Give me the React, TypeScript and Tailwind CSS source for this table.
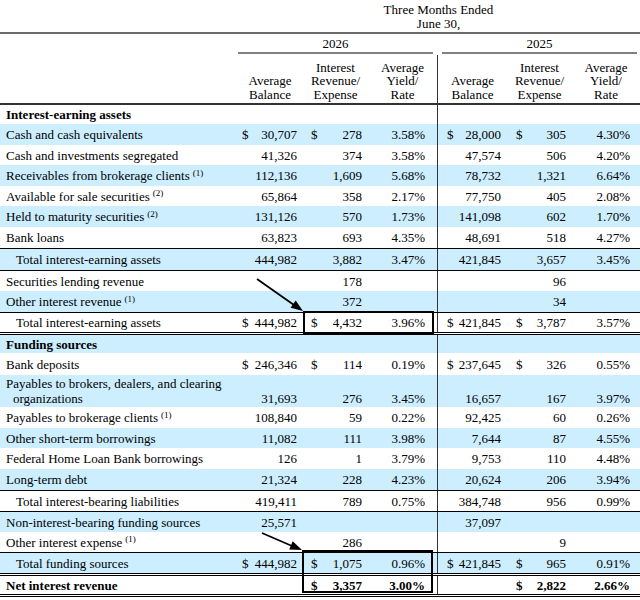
import type { ReactNode } from 'react'

type Row = {
  label: ReactNode
  h: string
  blue?: boolean
  line?: string
  bold?: boolean
  indent?: boolean
  tall?: boolean
  v?: string[]
}

const Sup = ({ n }: { n: number }) => <sup className="ml-[3px] text-[9px]">({n})</sup>

const THIN = 'border-b border-black'
const DOUBLE = 'border-b-[3px] border-double border-black'

const rows: Row[] = [
  { label: 'Interest-earning assets', h: 'h-[19px]', bold: true },
  { label: 'Cash and cash equivalents', h: 'h-[21px]', blue: true, v: ['$30,707', '$278', '3.58%', '$28,000', '$305', '4.30%'] },
  { label: 'Cash and investments segregated', h: 'h-[20px]', v: ['41,326', '374', '3.58%', '47,574', '506', '4.20%'] },
  { label: <>Receivables from brokerage clients<Sup n={1} /></>, h: 'h-[21px]', blue: true, v: ['112,136', '1,609', '5.68%', '78,732', '1,321', '6.64%'] },
  { label: <>Available for sale securities<Sup n={2} /></>, h: 'h-[20px]', v: ['65,864', '358', '2.17%', '77,750', '405', '2.08%'] },
  { label: <>Held to maturity securities<Sup n={2} /></>, h: 'h-[21px]', blue: true, v: ['131,126', '570', '1.73%', '141,098', '602', '1.70%'] },
  { label: 'Bank loans', h: 'h-[22px]', line: THIN, v: ['63,823', '693', '4.35%', '48,691', '518', '4.27%'] },
  { label: 'Total interest-earning assets', h: 'h-[22px]', blue: true, indent: true, line: THIN, v: ['444,982', '3,882', '3.47%', '421,845', '3,657', '3.45%'] },
  { label: 'Securities lending revenue', h: 'h-[20px]', v: ['', '178', '', '', '96', ''] },
  { label: <>Other interest revenue<Sup n={1} /></>, h: 'h-[22px]', blue: true, line: THIN, v: ['', '372', '', '', '34', ''] },
  { label: 'Total interest-earning assets', h: 'h-[22px]', indent: true, line: DOUBLE, v: ['$444,982', '$4,432', '3.96%', '$421,845', '$3,787', '3.57%'] },
  { label: 'Funding sources', h: 'h-[18px]', blue: true, bold: true },
  { label: 'Bank deposits', h: 'h-[22px]', v: ['$246,346', '$114', '0.19%', '$237,645', '$326', '0.55%'] },
  {
    label: (
      <>
        <div>Payables to brokers, dealers, and clearing</div>
        <div className="pl-[7px]">organizations</div>
      </>
    ),
    h: 'h-[32px]',
    blue: true,
    tall: true,
    v: ['31,693', '276', '3.45%', '16,657', '167', '3.97%'],
  },
  { label: <>Payables to brokerage clients<Sup n={1} /></>, h: 'h-[21px]', v: ['108,840', '59', '0.22%', '92,425', '60', '0.26%'] },
  { label: 'Other short-term borrowings', h: 'h-[20px]', blue: true, v: ['11,082', '111', '3.98%', '7,644', '87', '4.55%'] },
  { label: 'Federal Home Loan Bank borrowings', h: 'h-[21px]', v: ['126', '1', '3.79%', '9,753', '110', '4.48%'] },
  { label: 'Long-term debt', h: 'h-[22px]', blue: true, line: THIN, v: ['21,324', '228', '4.23%', '20,624', '206', '3.94%'] },
  { label: 'Total interest-bearing liabilities', h: 'h-[21px]', indent: true, line: THIN, v: ['419,411', '789', '0.75%', '384,748', '956', '0.99%'] },
  { label: 'Non-interest-bearing funding sources', h: 'h-[20px]', blue: true, v: ['25,571', '', '', '37,097', '', ''] },
  { label: <>Other interest expense<Sup n={1} /></>, h: 'h-[21px]', line: THIN, v: ['', '286', '', '', '9', ''] },
  { label: 'Total funding sources', h: 'h-[20px]', blue: true, indent: true, v: ['$444,982', '$1,075', '0.96%', '$421,845', '$965', '0.91%'] },
  {
    label: 'Net interest revenue',
    h: 'h-[24px]',
    bold: true,
    line: 'border-y-[3px] border-double border-black',
    v: ['', '$3,357', '3.00%', '', '$2,822', '2.66%'],
  },
]

const GRID = 'grid grid-cols-[237px_66px_65px_69px_70px_65px_68px]'

const colCls = [
  'pl-[5px] pr-[6px]',
  'pl-[8px] pr-[6px]',
  'pr-[12px]',
  'border-l border-[#333] pl-[9px] pr-[6px]',
  'pl-[9px] pr-[6px]',
  'pr-[10px]',
]

function Num({ v, cls, tall }: { v: string; cls: string; tall?: boolean }) {
  const dollar = v.startsWith('$')
  const n = dollar ? v.slice(1) : v
  return (
    <div className={`flex justify-between ${tall ? 'items-end pb-[1px]' : 'items-center'} ${cls}`}>
      <span>{dollar ? '$' : ''}</span>
      <span>{n}</span>
    </div>
  )
}

const headers = [
  <>Average<br />Balance</>,
  <>Interest<br />Revenue/<br />Expense</>,
  <>Average<br />Yield/<br />Rate</>,
  <>Average<br />Balance</>,
  <>Interest<br />Revenue/<br />Expense</>,
  <>Average<br />Yield/<br />Rate</>,
]

export default function App() {
  return (
    <div className="relative h-[600px] w-[640px] overflow-hidden bg-white font-[Liberation_Serif,serif] text-[13px] leading-[15px] text-black">
      {/* caption */}
      <div className="h-[34px] border-b-2 border-[#6a6a6a] pl-[237px] pt-[3px] text-center leading-[14px]">
        Three Months Ended
        <br />
        June 30,
      </div>

      {/* years */}
      <div className="grid h-[21px] grid-cols-[237px_200px_203px]">
        <div />
        <div className="ml-[1px] mr-[4px] flex h-[20px] items-center justify-center border-b-2 border-[#808080]">2026</div>
        <div className="ml-[5px] mr-[3px] flex h-[20px] items-center justify-center border-b-2 border-[#808080]">2025</div>
      </div>

      {/* column heads */}
      <div className={`${GRID} h-[50px] border-b-2 border-[#333]`}>
        <div />
        {headers.map((hd, i) => (
          <div
            key={i}
            className={`flex items-end justify-center pb-[2px] text-center leading-[13.5px] ${i === 3 ? 'border-l border-[#333]' : ''}`}
          >
            <div>{hd}</div>
          </div>
        ))}
      </div>

      {/* body */}
      {rows.map((r, i) => (
        <div key={i} className={`${GRID} ${r.h} ${r.line ?? ''} ${r.blue ? 'bg-[#cceeff]' : ''} ${r.bold ? 'font-bold' : ''}`}>
          <div className={`flex ${r.tall ? 'flex-col justify-start pt-[1px]' : 'items-center'} ${r.indent ? 'pl-[16px]' : 'pl-[6px]'} whitespace-nowrap`}>
            {r.tall ? r.label : <span>{r.label}</span>}
          </div>
          {colCls.map((c, j) => (
            <Num key={j} v={r.v ? r.v[j] : ''} cls={c} tall={r.tall} />
          ))}
        </div>
      ))}

      {/* highlight boxes and arrows */}
      <div className="pointer-events-none absolute left-[303px] top-[311px] h-[24px] w-[131px] border-2 border-black" />
      <div className="pointer-events-none absolute left-[302px] top-[550px] h-[43px] w-[131px] border-2 border-black" />
      <svg className="pointer-events-none absolute left-0 top-0" width="640" height="600">
        <line x1="257" y1="279" x2="294" y2="305" stroke="black" strokeWidth="1.8" />
        <polygon points="303,311 295.7,300.4 290.6,307.8" fill="black" />
        <line x1="262" y1="533" x2="292" y2="546" stroke="black" strokeWidth="1.8" />
        <polygon points="302,550 292.7,541.2 289.2,549.4" fill="black" />
      </svg>
    </div>
  )
}
